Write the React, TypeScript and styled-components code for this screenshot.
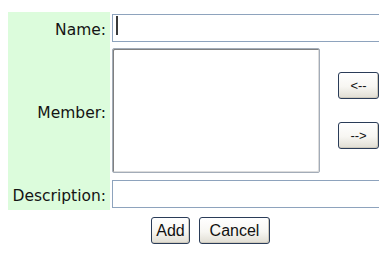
import React, { FC } from 'react'
import styled, { createGlobalStyle } from 'styled-components'

const GlobalStyle = createGlobalStyle`
  html, body {
    background: #ffffff;
  }
  body {
    margin: 8px;
    font-family: 'DejaVu Sans', Verdana, sans-serif;
  }
`

const Form = styled.form`
  box-sizing: border-box;
  display: grid;
  grid-template-columns: 102px 208px minmax(0, 1fr);
  grid-template-rows: 32px 133px 33px auto;
  column-gap: 2px;
  width: 375px;
  margin: 0;
  padding-top: 4px;
`

const Label = styled.label`
  display: flex;
  align-items: center;
  justify-content: flex-end;
  padding: 4px 4px 0 0;
  background: #dcfcdc;
  color: #141414;
  font-size: 15.5px;
`

const Cell = styled.div<{ $span?: number }>`
  display: flex;
  align-items: center;
  min-width: 0;
  grid-column: span ${(p) => p.$span ?? 1};
  position: relative;
`

const TextInput = styled.input`
  box-sizing: border-box;
  display: block;
  width: 100%;
  min-width: 0;
  height: 28px;
  margin: 0;
  padding: 2px 4px;
  border: 1px solid #8ea3bd;
  background: #ffffff;
  font-family: 'DejaVu Sans', sans-serif;
  font-size: 14px;
  caret-color: transparent;
  outline: none;
`

const Caret = styled.span`
  position: absolute;
  left: 4px;
  top: 4px;
  width: 2px;
  height: 19px;
  background: #3a3a3a;
`

const ListBox = styled.select`
  box-sizing: border-box;
  width: 208px;
  height: 125px;
  margin: 0;
  appearance: none;
  border: 1px solid #a3acb8;
  box-shadow: inset 1px 1px 0 #808080, inset -1px -1px 0 #dcdcdc;
  background: #ffffff;
  outline: none;
`

const ArrowColumn = styled.div`
  display: flex;
  flex-direction: column;
  justify-content: center;
  gap: 23px;
  padding-left: 16px;
`

const Button = styled.button<{ $w: number; $size?: number }>`
  box-sizing: border-box;
  width: ${(p) => p.$w}px;
  height: 27px;
  margin: 0;
  padding: 0;
  border: 1px solid #2a3c58;
  border-radius: 3px;
  background: linear-gradient(#ffffff 0%, #f7f6f2 55%, #e0ddd3 100%);
  box-shadow: inset -1px -1px 0 #cfcabd;
  color: #111111;
  font-family: 'Liberation Sans', Arial, sans-serif;
  font-size: ${(p) => p.$size ?? 16}px;
  cursor: pointer;
`

const Actions = styled.div`
  grid-column: 1 / -1;
  display: flex;
  justify-content: center;
  gap: 9px;
  padding: 7px 0 0 30px;
`

const App: FC = () => {
  return (
    <>
      <GlobalStyle />
      <Form onSubmit={(e) => e.preventDefault()}>
        <Label htmlFor="name">Name:</Label>
        <Cell $span={2}>
          <TextInput id="name" type="text" />
          <Caret />
        </Cell>

        <Label htmlFor="member">Member:</Label>
        <Cell>
          <ListBox id="member" multiple />
        </Cell>
        <ArrowColumn>
          <Button type="button" $w={41} $size={13}>
            &lt;--
          </Button>
          <Button type="button" $w={41} $size={13}>
            --&gt;
          </Button>
        </ArrowColumn>

        <Label htmlFor="description">Description:</Label>
        <Cell $span={2}>
          <TextInput id="description" type="text" />
        </Cell>

        <Actions>
          <Button type="submit" $w={39}>
            Add
          </Button>
          <Button type="button" $w={71}>
            Cancel
          </Button>
        </Actions>
      </Form>
    </>
  )
}

export default App
